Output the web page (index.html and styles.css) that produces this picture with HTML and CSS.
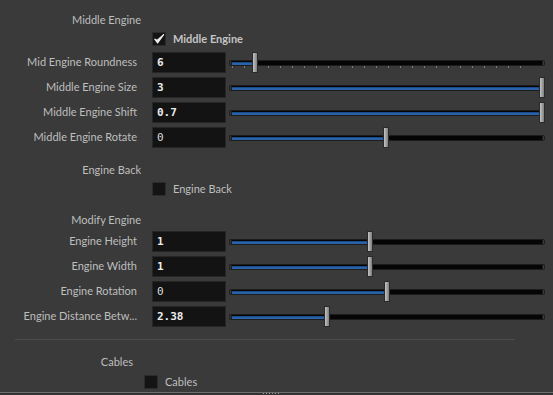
FILE: index.html
```html
<!DOCTYPE html>
<html lang="en">
<head>
    <meta charset="UTF-8">
    <title>Parameters</title>
    <link rel="stylesheet" href="styles.css">
</head>
<body>
    <div class="panel">
        <div class="section first">Middle Engine</div>
        <div class="toggle">
            <span class="box">
                <svg width="12" height="12" viewBox="0 0 12 12"><path d="M1.8 6.2 L4.6 10 L10.6 1.6 L4.4 7.2 Z" fill="#ececec" stroke="#ececec" stroke-width="1.2" stroke-linejoin="round"/></svg>
            </span>
            <span class="toggle-label on">Middle Engine</span>
        </div>

        <div class="params">
            <div class="row">
                <span class="label">Mid Engine Roundness</span>
                <span class="field changed">6</span>
                <div class="slider ticks">
                    <div class="track"><div class="fill" style="width: 21px"></div></div>
                    <div class="handle" style="left: 23px"></div>
                </div>
            </div>
            <div class="row">
                <span class="label">Middle Engine Size</span>
                <span class="field changed">3</span>
                <div class="slider">
                    <div class="track"><div class="fill" style="width: 308px"></div></div>
                    <div class="handle" style="left: 310px"></div>
                </div>
            </div>
            <div class="row">
                <span class="label">Middle Engine Shift</span>
                <span class="field changed">0.7</span>
                <div class="slider">
                    <div class="track"><div class="fill" style="width: 308px"></div></div>
                    <div class="handle" style="left: 310px"></div>
                </div>
            </div>
            <div class="row">
                <span class="label">Middle Engine Rotate</span>
                <span class="field">0</span>
                <div class="slider">
                    <div class="track"><div class="fill" style="width: 152px"></div></div>
                    <div class="handle" style="left: 154px"></div>
                </div>
            </div>
        </div>

        <div class="section back">Engine Back</div>
        <div class="toggle">
            <span class="box"></span>
            <span class="toggle-label">Engine Back</span>
        </div>

        <div class="section modify">Modify Engine</div>
        <div class="params">
            <div class="row">
                <span class="label">Engine Height</span>
                <span class="field changed">1</span>
                <div class="slider">
                    <div class="track"><div class="fill" style="width: 136px"></div></div>
                    <div class="handle" style="left: 138px"></div>
                </div>
            </div>
            <div class="row">
                <span class="label">Engine Width</span>
                <span class="field changed">1</span>
                <div class="slider">
                    <div class="track"><div class="fill" style="width: 136px"></div></div>
                    <div class="handle" style="left: 138px"></div>
                </div>
            </div>
            <div class="row">
                <span class="label">Engine Rotation</span>
                <span class="field">0</span>
                <div class="slider">
                    <div class="track"><div class="fill" style="width: 153px"></div></div>
                    <div class="handle" style="left: 155px"></div>
                </div>
            </div>
            <div class="row">
                <span class="label">Engine Distance Betw...</span>
                <span class="field changed">2.38</span>
                <div class="slider">
                    <div class="track"><div class="fill" style="width: 93px"></div></div>
                    <div class="handle" style="left: 95px"></div>
                </div>
            </div>
        </div>

        <div class="separator"></div>

        <div class="section cables">Cables</div>
        <div class="toggle cables">
            <span class="box"></span>
            <span class="toggle-label">Cables</span>
        </div>
    </div>
    <div class="splitter"><span class="grip"></span></div>
</body>
</html>
```

FILE: styles.css
```css
html, body {
    margin: 0;
    height: 100%;
}
body {
    background-color: #3a3a3a;
    color: #bebebe;
    font-family: Lato, "Noto Sans", sans-serif;
    font-size: 11px;
    overflow: hidden;
    display: flex;
    flex-direction: column;
}
.panel {
    flex: 1;
    padding-top: 8px;
}
.section {
    width: 141px;
    height: 24px;
    line-height: 24px;
    text-align: right;
    white-space: nowrap;
}
.section.back {
    margin-top: 8px;
}
.section.modify {
    margin-top: 12px;
    height: 21px;
}
.section.cables {
    width: 133px;
    margin-top: 10px;
}
.toggle {
    display: flex;
    align-items: center;
    height: 14px;
    padding-left: 152px;
    gap: 7px;
}
.toggle.cables {
    padding-left: 144px;
    height: 15px;
}
.box {
    width: 12px;
    height: 12px;
    background-color: #141414;
    border: 1px solid #2c2c2c;
    display: flex;
    align-items: center;
    justify-content: center;
}
.toggle-label {
    line-height: 14px;
}
.toggle-label.on {
    font-weight: bold;
    color: #c4c4c4;
}
.params {
    margin-top: 4px;
}
.section.modify + .params {
    margin-top: 0;
}
.row {
    display: flex;
    align-items: center;
    height: 25px;
    padding-right: 8px;
}
.label {
    width: 137px;
    margin-right: 15px;
    text-align: right;
    white-space: nowrap;
    line-height: 14px;
    padding-bottom: 1px;
}
.field {
    box-sizing: border-box;
    width: 74px;
    height: 21px;
    line-height: 19px;
    padding-left: 4px;
    background-color: #131313;
    border: 1px solid #262626;
    font-family: "DejaVu Sans Mono", monospace;
    font-size: 11px;
    color: #dedede;
}
.field.changed {
    font-weight: bold;
    color: #ececec;
}
.slider {
    position: relative;
    flex: 1;
    margin-left: 3px;
    height: 21px;
    display: flex;
    align-items: center;
}
.slider::before,
.slider::after {
    content: "";
    width: 2px;
    height: 6px;
    border: 1px solid #1e1e1e;
    box-sizing: border-box;
}
.slider::before {
    border-right: none;
    border-radius: 3px 0 0 3px;
}
.slider::after {
    border-left: none;
    border-radius: 0 3px 3px 0;
}
.track {
    flex: 1;
    height: 6px;
    box-sizing: border-box;
    background-color: #050505;
    border: 1px solid #1c1c1c;
    padding: 1px 0;
}
.fill {
    height: 3px;
    background-color: #2a62aa;
    border-top: 1px solid #1a4a88;
    box-sizing: border-box;
}
.ticks .track {
    position: relative;
}
.ticks .track::after {
    content: "";
    position: absolute;
    left: 0;
    right: 10px;
    top: 5px;
    height: 2px;
    background: repeating-linear-gradient(to right, #7a7a7a 0, #7a7a7a 1px, transparent 1px, transparent 12px);
}
.handle {
    position: absolute;
    top: 0;
    width: 6px;
    height: 21px;
    box-sizing: border-box;
    border: 1px solid #2a2a2a;
    background: linear-gradient(to right, #c4c4c4, #9a9a9a 60%, #808080);
}
.separator {
    height: 1px;
    margin: 10px 38px 0 15px;
    background-color: #4c4c4c;
}
.splitter {
    position: relative;
    height: 2px;
    border-top: 1px solid #6e6e6e;
    background-color: #333333;
}
.grip {
    position: absolute;
    left: 263px;
    top: 0;
    width: 18px;
    height: 1px;
    background: repeating-linear-gradient(to right, #9a9a9a 0, #9a9a9a 1px, transparent 1px, transparent 3px);
}
```
